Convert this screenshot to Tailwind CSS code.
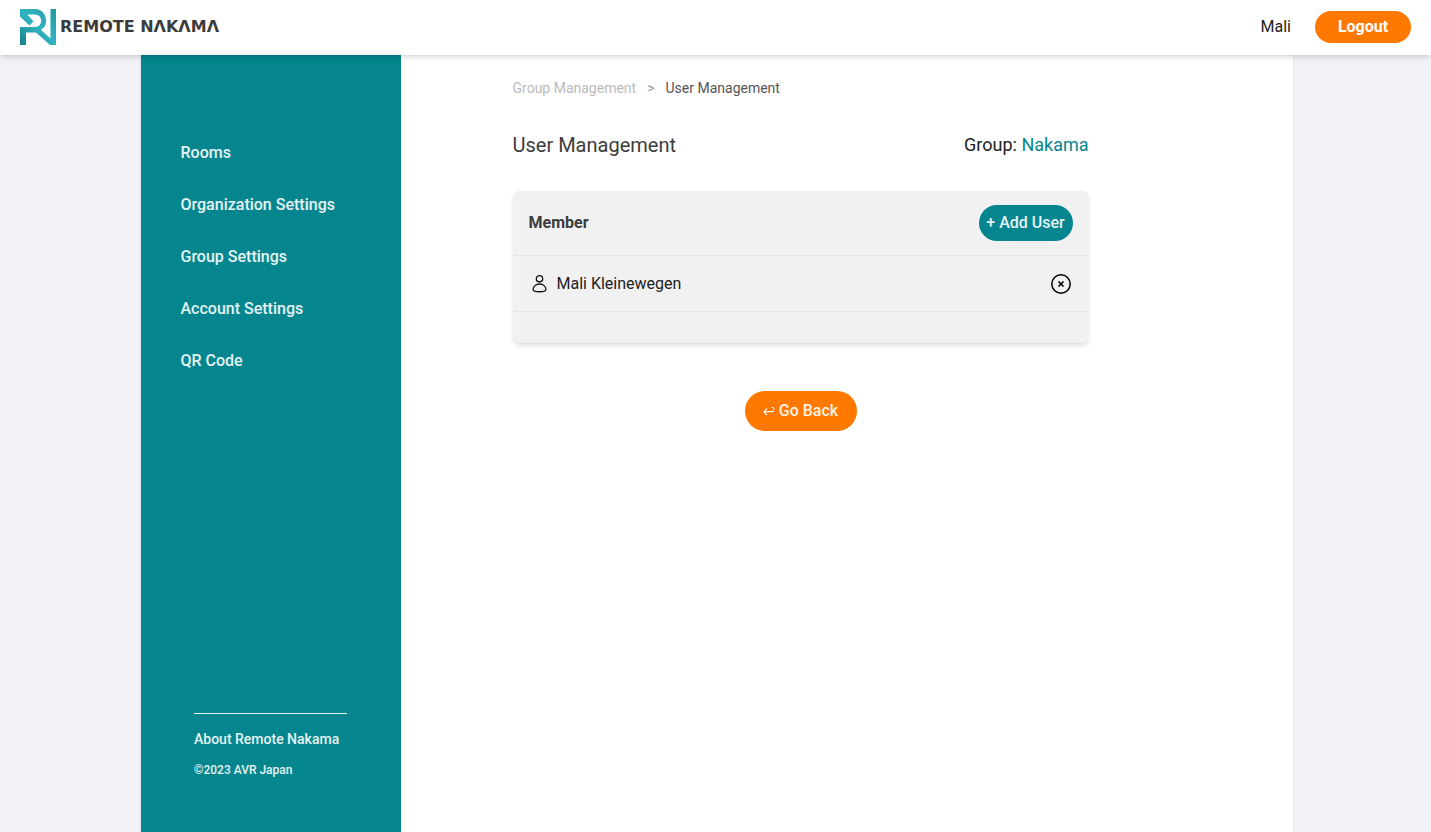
<!DOCTYPE html>
<html lang="en">
<head>
<meta charset="utf-8">
<meta name="viewport" content="width=device-width, initial-scale=1">
<title>User Management - Remote Nakama</title>
<script src="https://cdn.jsdelivr.net/npm/@tailwindcss/browser@4"></script>
</head>
<body class="flex min-h-screen flex-col bg-[#f1f3f8] font-[Roboto,sans-serif] text-base text-[#222]">
  <header class="relative z-10 flex h-[55px] items-center justify-between bg-white px-5 pb-0.5 shadow-md">
    <a href="#" aria-label="Remote Nakama" class="flex items-center gap-1">
      <svg class="size-9" viewBox="0 0 36 36" aria-hidden="true">
        <defs>
          <linearGradient id="mark" x1="0" y1="1" x2="1" y2="0">
            <stop offset="0" stop-color="#178088"/>
            <stop offset=".5" stop-color="#30b4c2"/>
            <stop offset="1" stop-color="#2399a1"/>
          </linearGradient>
        </defs>
        <path fill="url(#mark)" d="M0 0H15.500A11.500 11.500 0 0 1 21 21L30.500 29.500V0H36V36H30L16 23.500H6V36H0V18H15A6.250 6.250 0 0 0 15 5.500H7.500L13.500 12.500L9.500 16.500L0 7.500Z"/>
      </svg>
      <span class="font-['DejaVu_Sans',sans-serif] text-base font-bold text-[#3b3b3b]">REMOTE NΛKΛMΛ</span>
    </a>
    <div class="flex items-center gap-6">
      <span>Mali</span>
      <button type="button" class="h-8 w-24 rounded-full bg-[#ff7800] font-bold text-white">Logout</button>
    </div>
  </header>

  <div class="flex flex-1 flex-col pl-0.5">
    <div class="mx-auto flex w-full max-w-6xl flex-1 bg-white shadow">
      <aside class="flex w-[260px] shrink-0 flex-col bg-[#05868e] pt-[86px] pb-[50px] font-medium text-white/90">
        <nav class="flex flex-col gap-7 px-10">
          <a href="#">Rooms</a>
          <a href="#">Organization Settings</a>
          <a href="#">Group Settings</a>
          <a href="#">Account Settings</a>
          <a href="#">QR Code</a>
        </nav>
        <footer class="mx-auto mt-auto flex w-[153px] flex-col gap-[13px] border-t border-white/90 pt-[15px] pb-1">
          <a href="#" class="text-sm">About Remote Nakama</a>
          <small class="text-xs">©2023 AVR Japan</small>
        </footer>
      </aside>

      <main class="flex-1 px-28 pt-[23px]">
        <div class="max-w-xl">
          <nav aria-label="Breadcrumb" class="flex items-center gap-[11px] text-sm">
            <a href="#" class="text-[#bbb]">Group Management</a>
            <span class="text-[#999]">&gt;</span>
            <span class="text-[#555]">User Management</span>
          </nav>
          <div class="mt-[33px] flex items-center justify-between">
            <h1 class="text-xl text-[#3c3c3c]">User Management</h1>
            <p class="text-lg">Group: <span class="text-[#05868e]">Nakama</span></p>
          </div>
          <section class="mt-8 rounded-md bg-[#f1f1f1] pb-[31px] shadow-md">
            <div class="flex h-16 items-center justify-between px-4">
              <h2 class="font-bold text-[#3c3c3c]">Member</h2>
              <button type="button" class="h-9 w-[94px] rounded-full bg-[#05868e] font-medium text-white/90">+ Add User</button>
            </div>
            <ul class="border-y border-[#e5e5e5]">
              <li class="flex h-[55px] items-center justify-between px-4">
                <span class="flex items-center gap-2">
                  <svg class="size-5" viewBox="0 0 20 20" fill="none" stroke="#111" stroke-width="1.300" aria-hidden="true">
                    <circle cx="10.500" cy="4.800" r="3.200"/>
                    <path d="M4.100 15.500C4.100 12.500 6.800 10 10.500 10S16.900 12.500 16.900 15.500C16.900 18.500 4.100 18.500 4.100 15.500Z"/>
                  </svg>
                  Mali Kleinewegen
                </span>
                <button type="button" aria-label="Remove Mali Kleinewegen">
                  <svg class="size-6" viewBox="0 0 24 24" fill="none" stroke="#000">
                    <circle cx="12" cy="12" r="9.200" stroke-width="1.500"/>
                    <path d="M9.500 9.500L14.500 14.500M14.500 9.500L9.500 14.500" stroke-width="1.600"/>
                  </svg>
                </button>
              </li>
            </ul>
          </section>
          <button type="button" class="mx-auto mt-12 flex h-10 w-28 items-center justify-center gap-[3px] rounded-full bg-[#ff7800] font-medium text-white/90">
            <svg class="h-4 w-[13px]" viewBox="0 0 13 16" fill="none" stroke="currentColor" stroke-width="1.200" aria-hidden="true">
              <path d="M4 5.500L1 8.700L4 12M1 8.700H9.500A2.300 2.300 0 0 0 9.500 4.500H8.500"/>
            </svg>
            Go Back
          </button>
        </div>
      </main>
    </div>
  </div>
</body>
</html>
